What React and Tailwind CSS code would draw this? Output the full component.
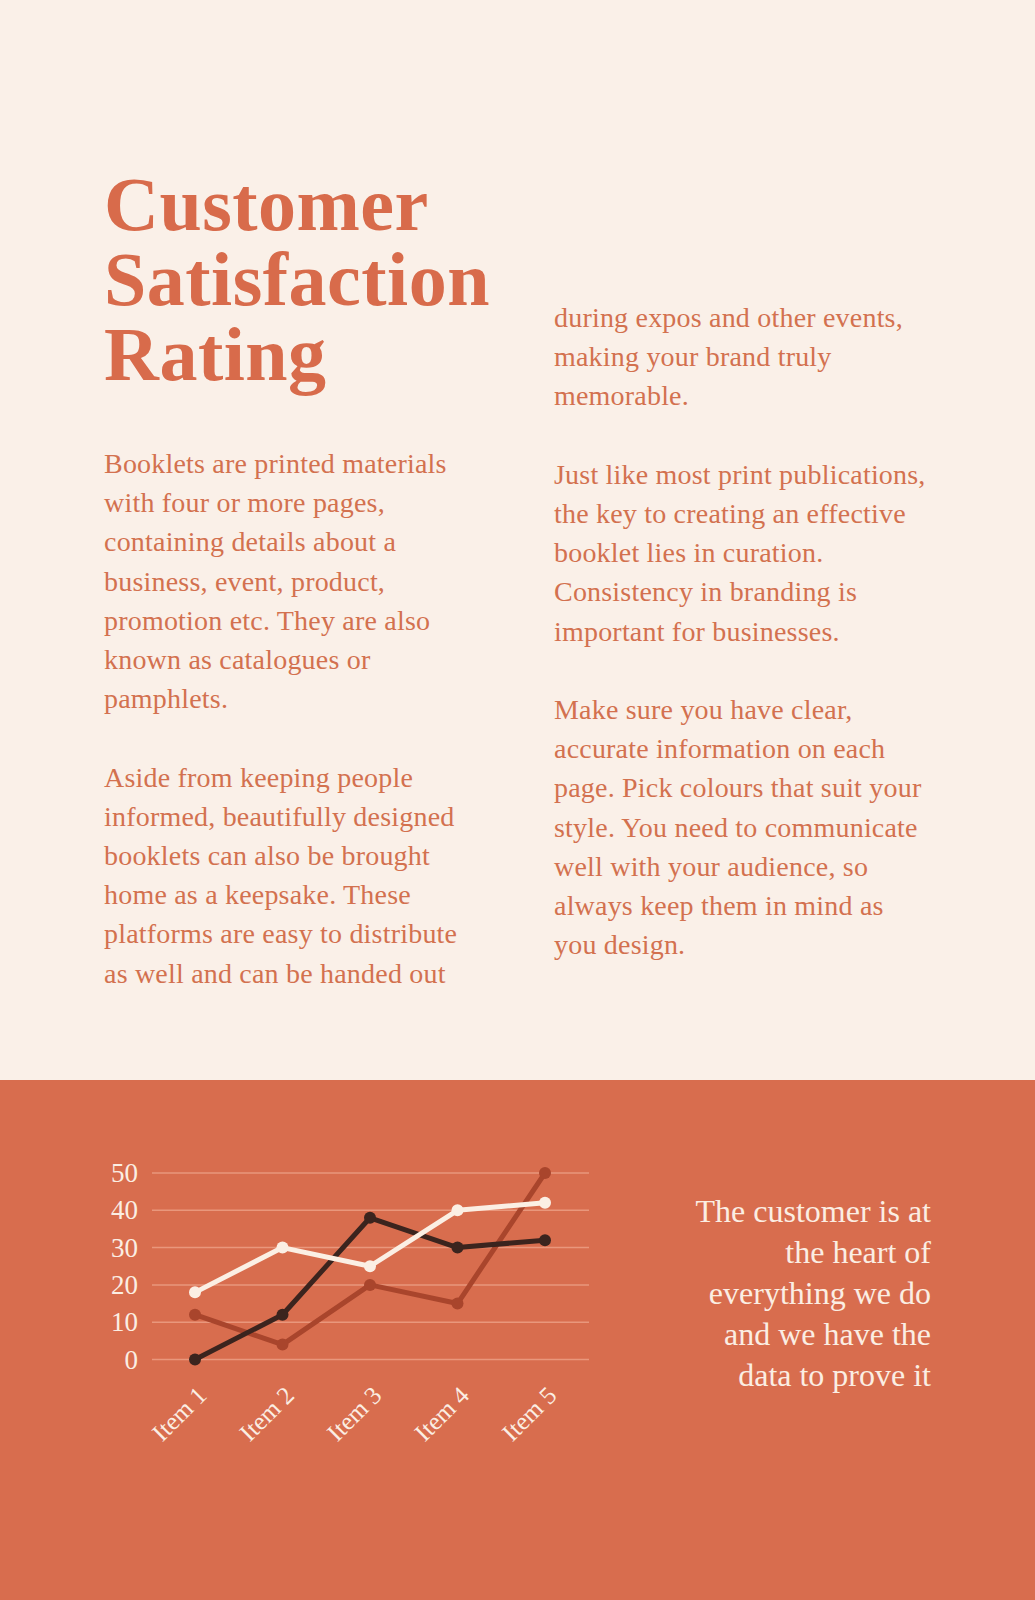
import React from 'react'

const serif = { fontFamily: '"Liberation Serif", "DejaVu Serif", serif' }

const leftParas = [
  [
    'Booklets are printed materials',
    'with four or more pages,',
    'containing details about a',
    'business, event, product,',
    'promotion etc. They are also',
    'known as catalogues or',
    'pamphlets.',
  ],
  [
    'Aside from keeping people',
    'informed, beautifully designed',
    'booklets can also be brought',
    'home as a keepsake. These',
    'platforms are easy to distribute',
    'as well and can be handed out',
  ],
]

const rightParas = [
  ['during expos and other events,', 'making your brand truly', 'memorable.'],
  [
    'Just like most print publications,',
    'the key to creating an effective',
    'booklet lies in curation.',
    'Consistency in branding is',
    'important for businesses.',
  ],
  [
    'Make sure you have clear,',
    'accurate information on each',
    'page. Pick colours that suit your',
    'style. You need to communicate',
    'well with your audience, so',
    'always keep them in mind as',
    'you design.',
  ],
]

const quote = ['The customer is at', 'the heart of', 'everything we do', 'and we have the', 'data to prove it']

const xs = [195, 282.5, 370, 457.5, 545]
const y = (v) => 1359.5 - v * 3.73

const series = [
  { color: '#a9452c', values: [12, 4, 20, 15, 50] },
  { color: '#3b241e', values: [0, 12, 38, 30, 32] },
  { color: '#fbefe4', values: [18, 30, 25, 40, 42] },
]

function Paragraphs({ paras }) {
  return (
    <div className="flex flex-col gap-[39.2px]">
      {paras.map((lines, i) => (
        <p key={i}>
          {lines.map((line) => (
            <span key={line} className="block whitespace-nowrap">
              {line}
            </span>
          ))}
        </p>
      ))}
    </div>
  )
}

function Chart() {
  return (
    <svg width="530" height="330" viewBox="90 1140 530 330" className="mt-[60px] shrink-0" style={serif}>
      {[0, 10, 20, 30, 40, 50].map((v) => (
        <g key={v}>
          <line x1="152" x2="589" y1={y(v)} y2={y(v)} stroke="#e9977c" strokeWidth="1.5" />
          <text x="138" y={y(v) + 9} textAnchor="end" fontSize="27" fill="#fbeee3">
            {v}
          </text>
        </g>
      ))}
      {series.map((s) => (
        <g key={s.color}>
          <polyline
            points={s.values.map((v, i) => `${xs[i]},${y(v)}`).join(' ')}
            fill="none"
            stroke={s.color}
            strokeWidth="5"
            strokeLinejoin="round"
          />
          {s.values.map((v, i) => (
            <circle key={i} cx={xs[i]} cy={y(v)} r="6" fill={s.color} />
          ))}
        </g>
      ))}
      {xs.map((x, i) => (
        <text
          key={i}
          x={x + 13}
          y="1397"
          textAnchor="end"
          fontSize="25"
          fill="#fbeee3"
          transform={`rotate(-45 ${x + 13} 1397)`}
        >
          Item {i + 1}
        </text>
      ))}
    </svg>
  )
}

export default function App() {
  return (
    <div className="w-[1035px] min-h-[1600px] bg-[#faf0e8]" style={serif}>
      {/* Top text section */}
      <section className="h-[1080px] flex px-[104px] text-[#d3714f] text-[28px] leading-[39.2px] tracking-[0.2px]">
        <div className="w-[450px] pt-[167px]">
          <h1 className="text-[76px] leading-[75px] font-bold tracking-[0.5px] text-[#d86b4b]">
            <span className="block">Customer</span>
            <span className="block">Satisfaction</span>
            <span className="block">Rating</span>
          </h1>
          <div className="mt-[52px]">
            <Paragraphs paras={leftParas} />
          </div>
        </div>
        <div className="pt-[298px]">
          <Paragraphs paras={rightParas} />
        </div>
      </section>

      {/* Chart band */}
      <section className="h-[520px] bg-[#d86d4e] flex items-start pl-[90px] pr-[104px]">
        <Chart />
        <div className="ml-auto pt-[111px] text-right text-[32px] leading-[41px] text-[#fbeee3]">
          {quote.map((line) => (
            <span key={line} className="block whitespace-nowrap">
              {line}
            </span>
          ))}
        </div>
      </section>
    </div>
  )
}
